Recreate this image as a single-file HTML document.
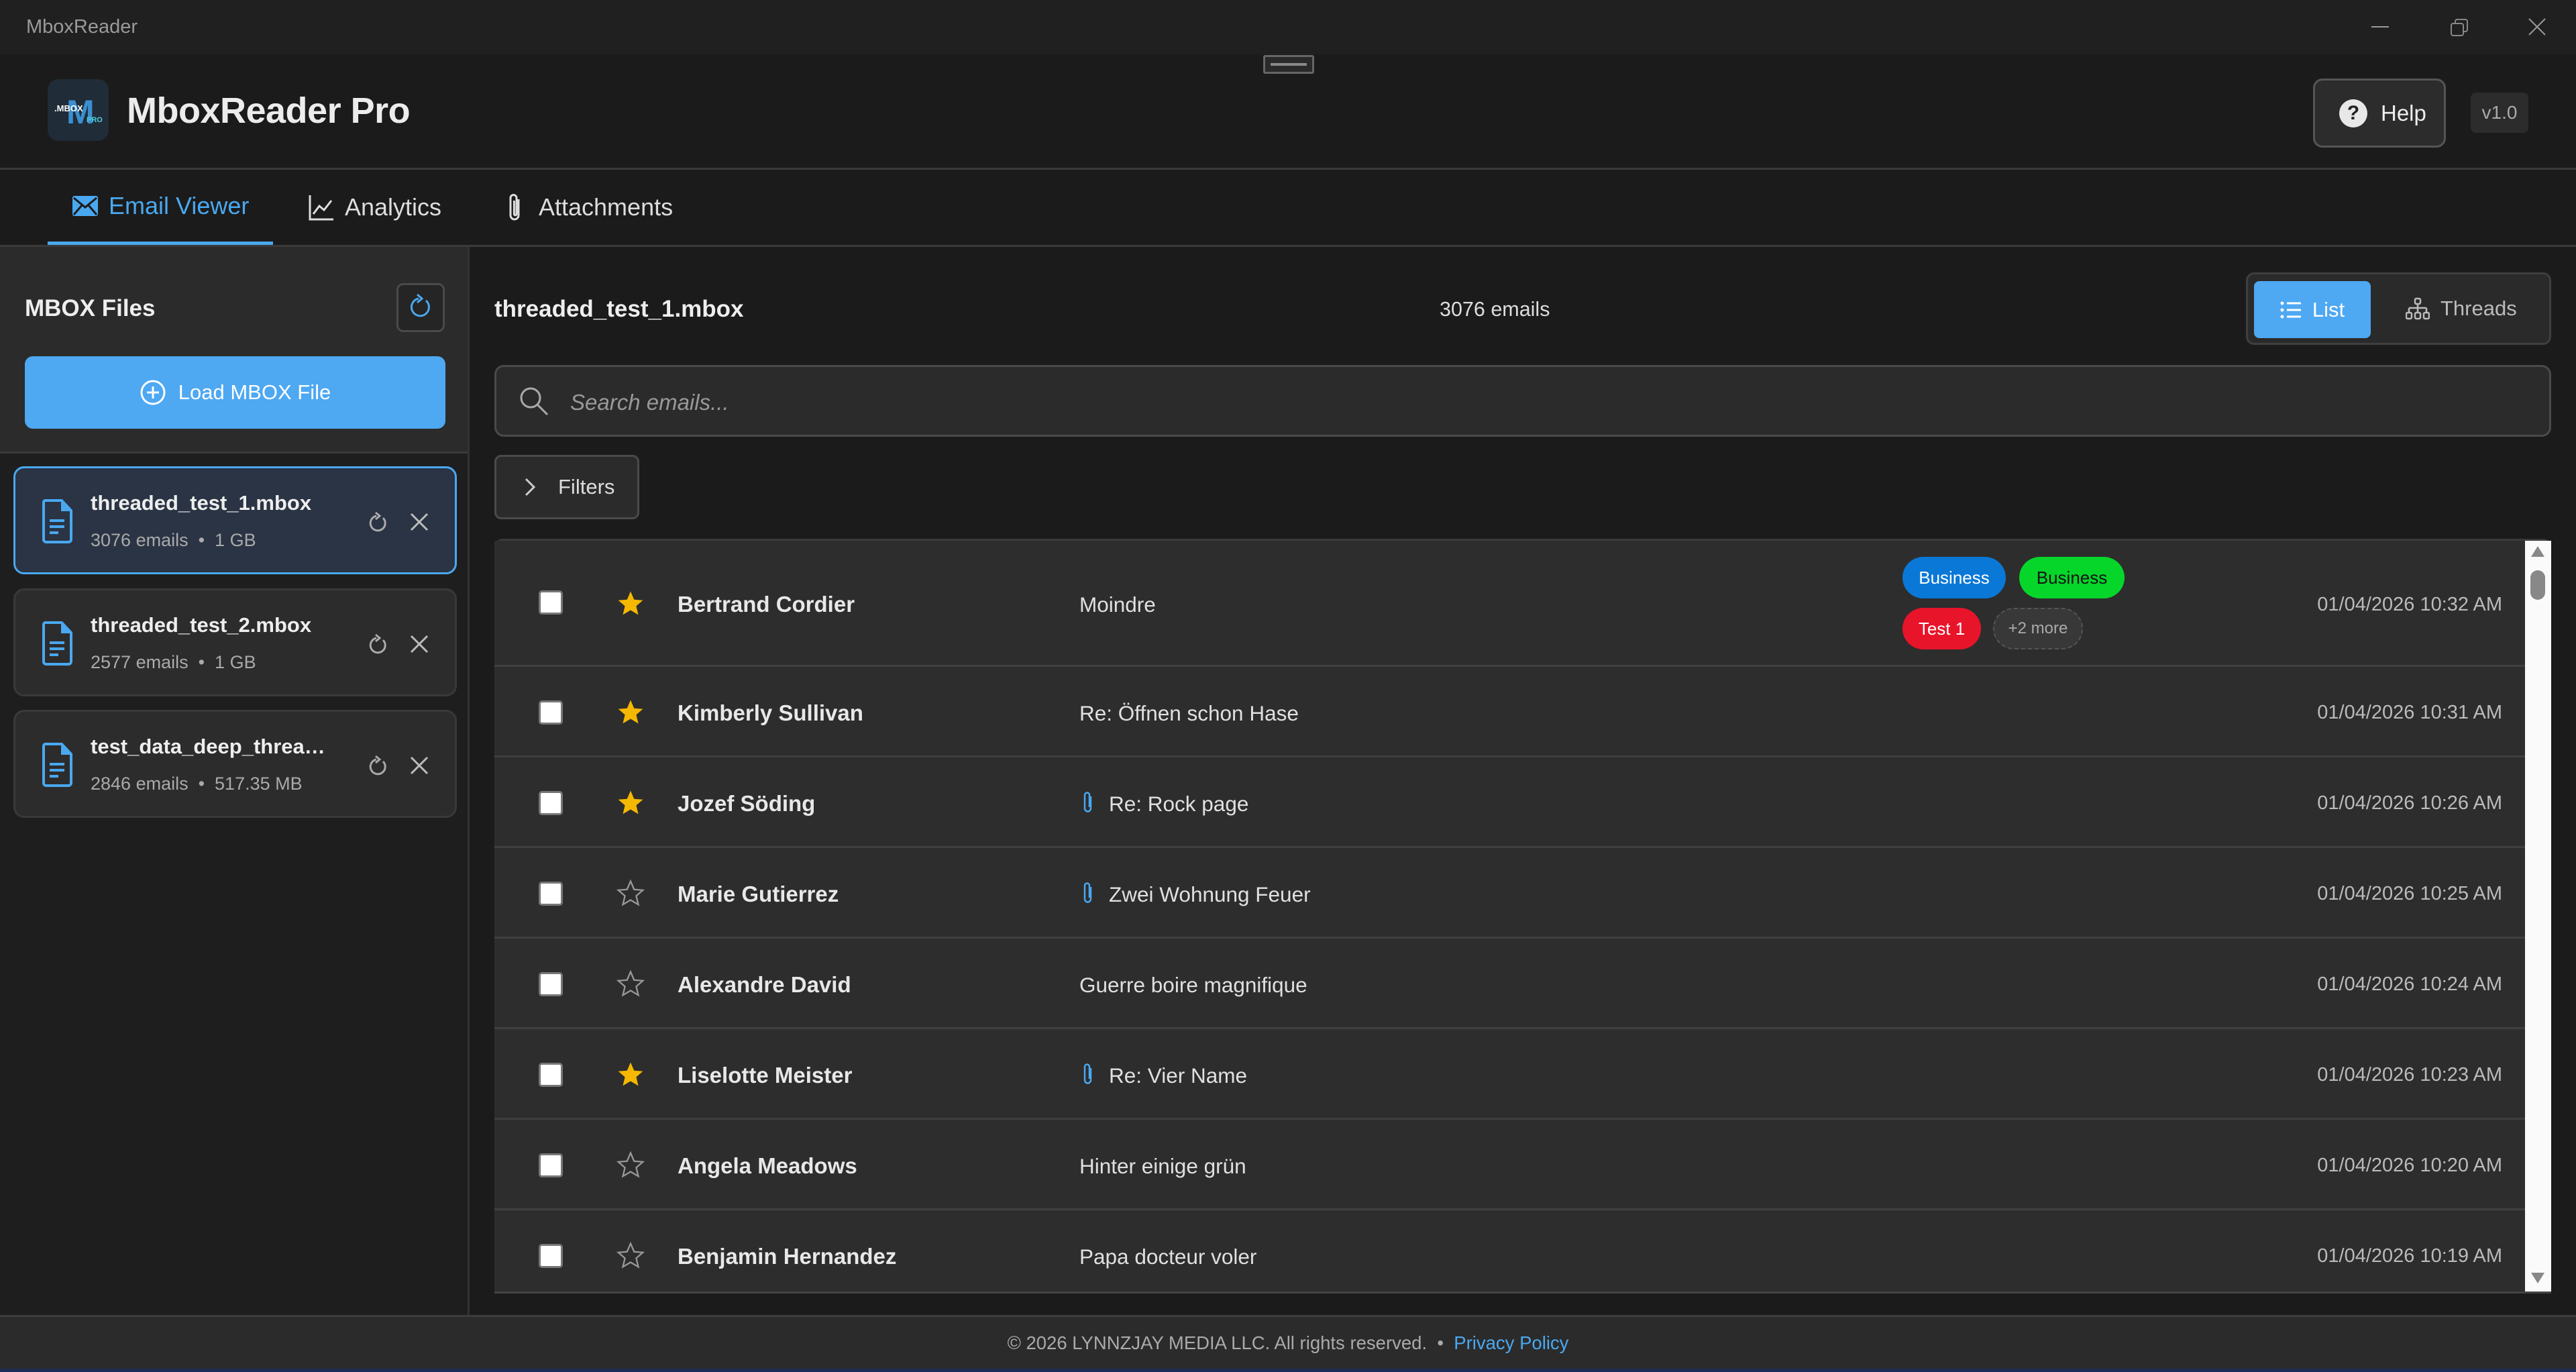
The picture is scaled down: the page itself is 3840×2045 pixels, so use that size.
<!DOCTYPE html>
<html><head><meta charset="utf-8"><style>
*{box-sizing:border-box;margin:0;padding:0}
body{width:3840px;height:2045px;background:#1b1b1b;font-family:"Liberation Sans",Arial,sans-serif;color:#e6e6e6;position:relative;overflow:hidden}
.a{position:absolute}
.tb{left:0;top:0;width:3840px;height:81px;background:#202020}
.hd{left:0;top:81px;width:3840px;height:172px;background:#1b1b1b;border-bottom:3px solid #3a3a3a}
.tabs{left:0;top:253px;width:3840px;height:115px;background:#1b1b1b;border-bottom:3px solid #3a3a3a}
.tab{position:absolute;top:0;height:112px;display:flex;align-items:center;font-size:36px;color:#ddd}
.side{left:0;top:368px;width:700px;height:1592px;background:#1e1e1e;border-right:3px solid #333}
.sidetop{left:0;top:368px;width:697px;height:308px;background:#2b2b2b;border-bottom:3px solid #3a3a3a}
.card{position:absolute;left:20px;width:661px;height:161px;border-radius:16px;background:#2c2c2c;border:3px solid #393939}
.card .nm{position:absolute;left:112px;top:34px;font-size:31px;font-weight:bold;color:#eee}
.card .sb{position:absolute;left:112px;top:92px;font-size:27px;color:#aaa}
.card svg{position:absolute}
.row{position:absolute;left:737px;width:3027px;background:#2d2d2d;border-bottom:3px solid #3f3f3f}
.cb{position:absolute;left:66px;width:36px;height:36px;background:#fff;border-radius:5px;border:3px solid #777}
.nmr{position:absolute;left:273px;font-size:33px;font-weight:bold;color:#e8e8e8}
.sj{position:absolute;left:872px;font-size:31.5px;color:#e0e0e0}
.dt{position:absolute;right:34px;font-size:29px;color:#bbb}
.tag{position:absolute;height:62px;border-radius:31px;font-size:26px;display:flex;align-items:center;justify-content:center}
</style></head><body>
<div class="a tb"></div>
<div class="a" style="left:39px;top:24px;font-size:29px;color:#9a9a9a">MboxReader</div>
<div class="a" style="left:3535px;top:39px;width:26px;height:2px;background:#999"></div>
<svg class="a" style="left:3652px;top:27px" width="30" height="28" viewBox="0 0 30 28"><rect x="2" y="8" width="18" height="18" rx="3" fill="none" stroke="#888" stroke-width="2"/><path d="M8 8V5a3 3 0 0 1 3-3h12a3 3 0 0 1 3 3v12a3 3 0 0 1-3 3h-3" fill="none" stroke="#888" stroke-width="2"/></svg>
<svg class="a" style="left:3769px;top:27px" width="26" height="26"><path d="M1 1L25 25M25 1L1 25" stroke="#999" stroke-width="2"/></svg>
<div class="a hd"></div>
<div class="a" style="left:1883px;top:82px;width:76px;height:28px;border:3px solid #666;border-radius:3px;background:#2a2a2a"><div style="margin:9px 8px;height:4px;border-top:2px solid #888;border-bottom:2px solid #888"></div></div>
<div class="a" style="left:71px;top:118px;width:91px;height:92px;border-radius:16px;background:#202c38;overflow:hidden">
<div style="position:absolute;left:28px;top:20px;font-size:50px;font-weight:bold;color:#3b8fd0">M</div>
<div style="position:absolute;left:10px;top:36px;font-size:13px;color:#fff;font-weight:bold">.MBOX</div>
<div style="position:absolute;left:58px;top:55px;font-size:11px;color:#4fd0e0;font-weight:bold">PRO</div></div>
<div class="a" style="left:189px;top:134px;font-size:54px;font-weight:bold;color:#ececec;letter-spacing:-0.5px">MboxReader Pro</div>
<div class="a" style="left:3448px;top:117px;width:198px;height:103px;border:3px solid #555;border-radius:14px;background:#2c2c2c;display:flex;align-items:center;padding-left:36px;font-size:33px;color:#eee"><span style="width:42px;height:42px;border-radius:50%;background:#e8e8e8;color:#222;font-weight:bold;font-size:30px;display:inline-flex;align-items:center;justify-content:center;margin-right:20px">?</span>Help</div>
<div class="a" style="left:3683px;top:138px;width:86px;height:60px;border-radius:8px;background:#2c2c2c;font-size:28px;color:#aaa;display:flex;align-items:center;justify-content:center">v1.0</div>

<div class="a tabs"></div>
<div class="tab" style="left:71px;top:253px;width:336px;padding-left:37px;color:#4aa8f0;border-bottom:5px solid #4aa8f0"><svg width="38" height="30" viewBox="0 0 38 30" style="margin-right:16px"><rect width="38" height="30" rx="3" fill="#4aa8f0"/><path d="M2 3L19 17L36 3M2 28L14 14M36 28L24 14" stroke="#1b1b1b" stroke-width="3" fill="none"/></svg>Email Viewer</div>
<div class="tab" style="left:460px;top:253px"><svg width="38" height="40" viewBox="0 0 38 40" style="margin-right:16px"><path d="M2 2V38H37M7 30L16 18L23 24L34 10" stroke="#ddd" stroke-width="3" fill="none"/></svg>Analytics</div>
<div class="tab" style="left:757px;top:253px"><svg width="22" height="44" viewBox="0 0 22 44" style="margin-right:24px"><path d="M16 10V34a6 6 0 0 1-12 0V8a4.5 4.5 0 0 1 9 0V32a1.8 1.8 0 0 1-3.6 0V12" stroke="#ddd" stroke-width="3" fill="none"/></svg>Attachments</div>

<div class="a side"></div>
<div class="a sidetop"></div>
<div class="a" style="left:37px;top:440px;font-size:35px;font-weight:bold;color:#eee">MBOX Files</div>
<div class="a" style="left:591px;top:422px;width:72px;height:73px;border:3px solid #4a4a4a;border-radius:10px;background:#252525"><svg width="66" height="67" viewBox="0 0 66 67"><path d="M41 23A13 13 0 1 1 30 20" stroke="#4aa8f0" stroke-width="3" fill="none"/><path d="M28 14L35 20L28 26" stroke="#4aa8f0" stroke-width="3" fill="none"/></svg></div>
<div class="a" style="left:37px;top:531px;width:627px;height:108px;background:#4ea8f2;border-radius:12px;display:flex;align-items:center;justify-content:center;font-size:31px;color:#fff"><svg width="40" height="40" style="margin-right:18px"><circle cx="20" cy="20" r="17" stroke="#fff" stroke-width="3" fill="none"/><path d="M20 11V29M11 20H29" stroke="#fff" stroke-width="3"/></svg>Load MBOX File</div>

<div class="card" style="top:695px;background:#2a3444;border-color:#4aa8f0"><svg style="left:40px;top:46px" width="46" height="66" viewBox="0 0 46 66"><path d="M4 2H29L43 17V60a4 4 0 0 1-4 4H6a4 4 0 0 1-4-4V6a4 4 0 0 1 2-4z" stroke="#4aa8f0" stroke-width="4" fill="none"/><path d="M28 2V18H43" fill="#4aa8f0"/><path d="M11 32H33M11 41H33M11 50H24" stroke="#4aa8f0" stroke-width="4"/></svg><div class="nm">threaded_test_1.mbox</div><div class="sb">3076 emails &nbsp;•&nbsp; 1 GB</div>
<svg style="left:524px;top:64px" width="32" height="34"><path d="M24 10A11 11 0 1 1 14 7" stroke="#aaa" stroke-width="3" fill="none"/><path d="M13 2L19 7L13 12" stroke="#aaa" stroke-width="3" fill="none"/></svg><svg style="left:588px;top:66px" width="28" height="28"><path d="M2 2L26 26M26 2L2 26" stroke="#bbb" stroke-width="3"/></svg></div>
<div class="card" style="top:877px"><svg style="left:40px;top:46px" width="46" height="66" viewBox="0 0 46 66"><path d="M4 2H29L43 17V60a4 4 0 0 1-4 4H6a4 4 0 0 1-4-4V6a4 4 0 0 1 2-4z" stroke="#4aa8f0" stroke-width="4" fill="none"/><path d="M28 2V18H43" fill="#4aa8f0"/><path d="M11 32H33M11 41H33M11 50H24" stroke="#4aa8f0" stroke-width="4"/></svg><div class="nm">threaded_test_2.mbox</div><div class="sb">2577 emails &nbsp;•&nbsp; 1 GB</div>
<svg style="left:524px;top:64px" width="32" height="34"><path d="M24 10A11 11 0 1 1 14 7" stroke="#aaa" stroke-width="3" fill="none"/><path d="M13 2L19 7L13 12" stroke="#aaa" stroke-width="3" fill="none"/></svg><svg style="left:588px;top:66px" width="28" height="28"><path d="M2 2L26 26M26 2L2 26" stroke="#bbb" stroke-width="3"/></svg></div>
<div class="card" style="top:1058px"><svg style="left:40px;top:46px" width="46" height="66" viewBox="0 0 46 66"><path d="M4 2H29L43 17V60a4 4 0 0 1-4 4H6a4 4 0 0 1-4-4V6a4 4 0 0 1 2-4z" stroke="#4aa8f0" stroke-width="4" fill="none"/><path d="M28 2V18H43" fill="#4aa8f0"/><path d="M11 32H33M11 41H33M11 50H24" stroke="#4aa8f0" stroke-width="4"/></svg><div class="nm">test_data_deep_threa…</div><div class="sb">2846 emails &nbsp;•&nbsp; 517.35 MB</div>
<svg style="left:524px;top:64px" width="32" height="34"><path d="M24 10A11 11 0 1 1 14 7" stroke="#aaa" stroke-width="3" fill="none"/><path d="M13 2L19 7L13 12" stroke="#aaa" stroke-width="3" fill="none"/></svg><svg style="left:588px;top:66px" width="28" height="28"><path d="M2 2L26 26M26 2L2 26" stroke="#bbb" stroke-width="3"/></svg></div>

<div class="a" style="left:737px;top:441px;font-size:35px;font-weight:bold;color:#eee">threaded_test_1.mbox</div>
<div class="a" style="left:2146px;top:444px;font-size:30.5px;color:#ddd">3076 emails</div>
<div class="a" style="left:3348px;top:406px;width:455px;height:108px;border:3px solid #3f3f3f;border-radius:12px;background:#2a2a2a"></div>
<div class="a" style="left:3360px;top:419px;width:174px;height:85px;border-radius:8px;background:#4ea8f2;display:flex;align-items:center;justify-content:center;font-size:31px;color:#fff"><svg width="32" height="26" style="margin-right:16px"><path d="M10 3H31M10 13H31M10 23H31" stroke="#fff" stroke-width="3"/><circle cx="3" cy="3" r="2.5" fill="#fff"/><circle cx="3" cy="13" r="2.5" fill="#fff"/><circle cx="3" cy="23" r="2.5" fill="#fff"/></svg>List</div>
<div class="a" style="left:3586px;top:442px;font-size:31px;color:#bbb;display:flex;align-items:center"><svg width="36" height="34" style="margin-right:16px" viewBox="0 0 36 34"><rect x="14" y="2" width="8" height="8" rx="2" stroke="#bbb" stroke-width="2.5" fill="none"/><path d="M18 10V16M5 16H31M5 16V22M18 16V22M31 16V22" stroke="#bbb" stroke-width="2.5" fill="none"/><rect x="1" y="23" width="8" height="9" rx="2" stroke="#bbb" stroke-width="2.5" fill="none"/><rect x="14" y="23" width="8" height="9" rx="2" stroke="#bbb" stroke-width="2.5" fill="none"/><rect x="27" y="23" width="8" height="9" rx="2" stroke="#bbb" stroke-width="2.5" fill="none"/></svg>Threads</div>

<div class="a" style="left:737px;top:544px;width:3066px;height:107px;border:3px solid #4a4a4a;border-radius:14px;background:#2b2b2b"></div>
<svg class="a" style="left:773px;top:575px" width="46" height="46"><circle cx="18" cy="18" r="14" stroke="#aaa" stroke-width="3" fill="none"/><path d="M28 28L43 43" stroke="#aaa" stroke-width="3"/></svg>
<div class="a" style="left:850px;top:581px;font-size:33px;font-style:italic;color:#999">Search emails...</div>
<div class="a" style="left:737px;top:678px;width:216px;height:96px;border:3px solid #4a4a4a;border-radius:10px;background:#2b2b2b;display:flex;align-items:center;padding-left:42px;font-size:31px;color:#ddd"><svg width="16" height="28" style="margin-right:34px"><path d="M2 2L14 14L2 26" stroke="#ccc" stroke-width="3" fill="none"/></svg>Filters</div>

<div class="a" style="left:737px;top:803px;width:3066px;height:1122px;border:3px solid #3a3a3a;border-radius:12px 12px 0 0;background:#2d2d2d;overflow:hidden"></div>
<div class="a" style="left:3764px;top:806px;width:39px;height:1119px;background:#fafafa"></div>
<svg class="a" style="left:3771px;top:812px" width="24" height="20"><path d="M12 2L22 18H2z" fill="#888"/></svg>
<div class="a" style="left:3772px;top:850px;width:22px;height:44px;border-radius:11px;background:#888"></div>
<svg class="a" style="left:3771px;top:1895px" width="24" height="20"><path d="M12 18L22 2H2z" fill="#888"/></svg>

<div style="position:absolute;left:0;top:0">
<div class="row" style="top:806px;height:188px"><div class="cb" style="top:74px"></div><svg class="a" style="left:182px;top:72px" width="42" height="42" viewBox="0 0 24 24"><path d="M12 2l3 7 7.5.6-5.7 4.9 1.8 7.4L12 18l-6.6 3.9 1.8-7.4L1.5 9.6 9 9z" fill="#f5b800"/></svg><div class="nmr" style="top:76px">Bertrand Cordier</div><div class="sj" style="top:77px">Moindre</div>
<div class="tag" style="left:2099px;top:24px;width:154px;background:#0a78d6;color:#fff">Business</div><div class="tag" style="left:2273px;top:24px;width:157px;background:#06d62a;color:#111">Business</div><div class="tag" style="left:2099px;top:100px;width:117px;background:#e8142a;color:#fff">Test 1</div><div class="tag" style="left:2234px;top:100px;width:134px;background:#383838;border:2px dashed #555;color:#aaa;font-size:24px">+2 more</div>
<div class="dt" style="top:79px">01/04/2026 10:32 AM</div></div>
<div class="row" style="top:994px;height:135px"><div class="cb" style="top:50px"></div><svg class="a" style="left:182px;top:46px" width="42" height="42" viewBox="0 0 24 24"><path d="M12 2l3 7 7.5.6-5.7 4.9 1.8 7.4L12 18l-6.6 3.9 1.8-7.4L1.5 9.6 9 9z" fill="#f5b800"/></svg><div class="nmr" style="top:50px">Kimberly Sullivan</div><div class="sj" style="top:51px">Re: Öffnen schon Hase</div><div class="dt" style="top:52px">01/04/2026 10:31 AM</div></div>
<div class="row" style="top:1129px;height:135px"><div class="cb" style="top:50px"></div><svg class="a" style="left:182px;top:46px" width="42" height="42" viewBox="0 0 24 24"><path d="M12 2l3 7 7.5.6-5.7 4.9 1.8 7.4L12 18l-6.6 3.9 1.8-7.4L1.5 9.6 9 9z" fill="#f5b800"/></svg><div class="nmr" style="top:50px">Jozef Söding</div><svg class="a" style="left:877px;top:50px" width="16" height="34" viewBox="0 0 16 34"><path d="M12 8V26a4.5 4.5 0 0 1-9 0V6a3.5 3.5 0 0 1 7 0V24" stroke="#4aa8f0" stroke-width="2.5" fill="none"/></svg><div class="sj" style="top:51px;left:916px">Re: Rock page</div><div class="dt" style="top:52px">01/04/2026 10:26 AM</div></div>
<div class="row" style="top:1264px;height:135px"><div class="cb" style="top:50px"></div><svg class="a" style="left:182px;top:46px" width="42" height="42" viewBox="0 0 24 24"><path d="M12 2l3 7 7.5.6-5.7 4.9 1.8 7.4L12 18l-6.6 3.9 1.8-7.4L1.5 9.6 9 9z" fill="none" stroke="#999" stroke-width="1.3"/></svg><div class="nmr" style="top:50px">Marie Gutierrez</div><svg class="a" style="left:877px;top:50px" width="16" height="34" viewBox="0 0 16 34"><path d="M12 8V26a4.5 4.5 0 0 1-9 0V6a3.5 3.5 0 0 1 7 0V24" stroke="#4aa8f0" stroke-width="2.5" fill="none"/></svg><div class="sj" style="top:51px;left:916px">Zwei Wohnung Feuer</div><div class="dt" style="top:52px">01/04/2026 10:25 AM</div></div>
<div class="row" style="top:1399px;height:135px"><div class="cb" style="top:50px"></div><svg class="a" style="left:182px;top:46px" width="42" height="42" viewBox="0 0 24 24"><path d="M12 2l3 7 7.5.6-5.7 4.9 1.8 7.4L12 18l-6.6 3.9 1.8-7.4L1.5 9.6 9 9z" fill="none" stroke="#999" stroke-width="1.3"/></svg><div class="nmr" style="top:50px">Alexandre David</div><div class="sj" style="top:51px">Guerre boire magnifique</div><div class="dt" style="top:52px">01/04/2026 10:24 AM</div></div>
<div class="row" style="top:1534px;height:135px"><div class="cb" style="top:50px"></div><svg class="a" style="left:182px;top:46px" width="42" height="42" viewBox="0 0 24 24"><path d="M12 2l3 7 7.5.6-5.7 4.9 1.8 7.4L12 18l-6.6 3.9 1.8-7.4L1.5 9.6 9 9z" fill="#f5b800"/></svg><div class="nmr" style="top:50px">Liselotte Meister</div><svg class="a" style="left:877px;top:50px" width="16" height="34" viewBox="0 0 16 34"><path d="M12 8V26a4.5 4.5 0 0 1-9 0V6a3.5 3.5 0 0 1 7 0V24" stroke="#4aa8f0" stroke-width="2.5" fill="none"/></svg><div class="sj" style="top:51px;left:916px">Re: Vier Name</div><div class="dt" style="top:52px">01/04/2026 10:23 AM</div></div>
<div class="row" style="top:1669px;height:135px"><div class="cb" style="top:50px"></div><svg class="a" style="left:182px;top:46px" width="42" height="42" viewBox="0 0 24 24"><path d="M12 2l3 7 7.5.6-5.7 4.9 1.8 7.4L12 18l-6.6 3.9 1.8-7.4L1.5 9.6 9 9z" fill="none" stroke="#999" stroke-width="1.3"/></svg><div class="nmr" style="top:50px">Angela Meadows</div><div class="sj" style="top:51px">Hinter einige grün</div><div class="dt" style="top:52px">01/04/2026 10:20 AM</div></div>
<div class="row" style="top:1804px;height:121px;border-bottom:0"><div class="cb" style="top:50px"></div><svg class="a" style="left:182px;top:46px" width="42" height="42" viewBox="0 0 24 24"><path d="M12 2l3 7 7.5.6-5.7 4.9 1.8 7.4L12 18l-6.6 3.9 1.8-7.4L1.5 9.6 9 9z" fill="none" stroke="#999" stroke-width="1.3"/></svg><div class="nmr" style="top:50px">Benjamin Hernandez</div><div class="sj" style="top:51px">Papa docteur voler</div><div class="dt" style="top:52px">01/04/2026 10:19 AM</div></div>
</div>
<div class="a" style="left:737px;top:1925px;width:3066px;height:3px;background:#444"></div>

<div class="a" style="left:0;top:1960px;width:3840px;height:85px;background:#2b2b2b;border-top:3px solid #3d3d3d"></div>
<div class="a" style="left:0;top:1986px;width:3840px;text-align:center;font-size:27.5px;color:#aaa">© 2026 LYNNZJAY MEDIA LLC. All rights reserved. &nbsp;• &nbsp;<span style="color:#4aa8f0">Privacy Policy</span></div>
<div class="a" style="left:0;top:2040px;width:3840px;height:5px;background:#1d2c55"></div>
</body></html>
